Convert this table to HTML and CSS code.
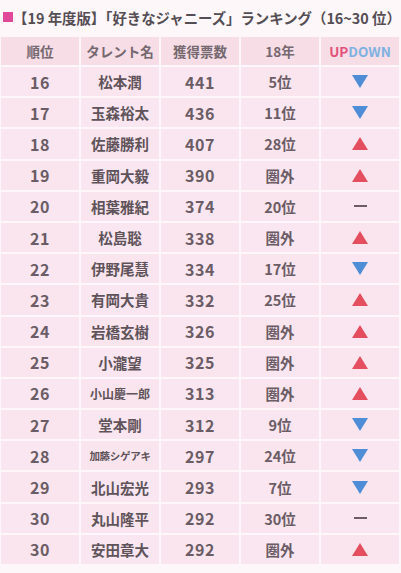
FILE: index.html
```html
<!DOCTYPE html>
<html lang="ja">
<head>
<meta charset="utf-8">
<link rel="stylesheet" href="styles.css">
</head>
<body>
<div class="title"><span class="sq"></span><span>【19 年度版】「好きなジャニーズ」ランキング（16~30 位）</span></div>
<div class="table">
  <div class="c h">順位</div><div class="c h">タレント名</div><div class="c h">獲得票数</div><div class="c h">18年</div><div class="c h"><span class="up">UP</span><span class="down">DOWN</span></div>

  <div class="c n">16</div><div class="c nm">松本潤</div><div class="c n">441</div><div class="c p">5位</div><div class="c"><span class="tri-d"></span></div>
  <div class="c n">17</div><div class="c nm">玉森裕太</div><div class="c n">436</div><div class="c p">11位</div><div class="c"><span class="tri-d"></span></div>
  <div class="c n">18</div><div class="c nm">佐藤勝利</div><div class="c n">407</div><div class="c p">28位</div><div class="c"><span class="tri-u"></span></div>
  <div class="c n">19</div><div class="c nm">重岡大毅</div><div class="c n">390</div><div class="c p">圏外</div><div class="c"><span class="tri-u"></span></div>
  <div class="c n">20</div><div class="c nm">相葉雅紀</div><div class="c n">374</div><div class="c p">20位</div><div class="c"><span class="dash"></span></div>
  <div class="c n">21</div><div class="c nm">松島聡</div><div class="c n">338</div><div class="c p">圏外</div><div class="c"><span class="tri-u"></span></div>
  <div class="c n">22</div><div class="c nm">伊野尾慧</div><div class="c n">334</div><div class="c p">17位</div><div class="c"><span class="tri-d"></span></div>
  <div class="c n">23</div><div class="c nm">有岡大貴</div><div class="c n">332</div><div class="c p">25位</div><div class="c"><span class="tri-u"></span></div>
  <div class="c n">24</div><div class="c nm">岩橋玄樹</div><div class="c n">326</div><div class="c p">圏外</div><div class="c"><span class="tri-u"></span></div>
  <div class="c n">25</div><div class="c nm">小瀧望</div><div class="c n">325</div><div class="c p">圏外</div><div class="c"><span class="tri-u"></span></div>
  <div class="c n">26</div><div class="c nm sm">小山慶一郎</div><div class="c n">313</div><div class="c p">圏外</div><div class="c"><span class="tri-u"></span></div>
  <div class="c n">27</div><div class="c nm">堂本剛</div><div class="c n">312</div><div class="c p">9位</div><div class="c"><span class="tri-d"></span></div>
  <div class="c n">28</div><div class="c nm xs">加藤シゲアキ</div><div class="c n">297</div><div class="c p">24位</div><div class="c"><span class="tri-d"></span></div>
  <div class="c n">29</div><div class="c nm">北山宏光</div><div class="c n">293</div><div class="c p">7位</div><div class="c"><span class="tri-d"></span></div>
  <div class="c n">30</div><div class="c nm">丸山隆平</div><div class="c n">292</div><div class="c p">30位</div><div class="c"><span class="dash"></span></div>
  <div class="c n">30</div><div class="c nm">安田章大</div><div class="c n">292</div><div class="c p">圏外</div><div class="c"><span class="tri-u"></span></div>
</div>
</body>
</html>
```
FILE: styles.css
```css
html, body {
  margin: 0;
  padding: 0;
}
body {
  width: 401px;
  height: 573px;
  background: #fdf7fa;
  font-family: "Noto Sans CJK JP", "Noto Sans", sans-serif;
  color: #6b5c65;
  overflow: hidden;
}
.title {
  display: flex;
  align-items: center;
  height: 20px;
  margin: 7px 0 0 3px;
  font-size: 14.4px;
  font-weight: 700;
  color: #554d54;
  white-space: nowrap;
}
.sq {
  flex-shrink: 0;
  display: inline-block;
  width: 10px;
  height: 10px;
  background: #e0489a;
}
.table {
  display: grid;
  grid-template-columns: repeat(5, 1fr);
  grid-template-rows: 28px;
  grid-auto-rows: 29.2px;
  gap: 2px;
  width: 398px;
  margin: 10px 0 0 1px;
}
.c {
  background: #fae5ee;
  display: flex;
  align-items: center;
  justify-content: center;
  font-weight: 700;
  white-space: nowrap;
}
.c:nth-child(even) {
  background: #f9e6f1;
}
.h {
  background: #f6dde6;
  font-size: 13.5px;
  color: #75686f;
}
.h:nth-child(even) {
  background: #f6dde6;
}
.n {
  font-size: 16px;
  letter-spacing: 0.6px;
}
.nm {
  font-size: 14.5px;
  color: #5f535a;
}
.nm.sm {
  font-size: 12px;
}
.nm.xs {
  font-size: 10.5px;
  letter-spacing: -0.3px;
}
.p {
  font-size: 14.5px;
}
.up {
  color: #e4507a;
  font-size: 13.5px;
}
.down {
  color: #7fb2e2;
  font-size: 13.5px;
}
.tri-d {
  width: 0;
  height: 0;
  border-left: 8px solid transparent;
  border-right: 8px solid transparent;
  border-top: 13px solid #4f8ed6;
}
.tri-u {
  width: 0;
  height: 0;
  border-left: 8px solid transparent;
  border-right: 8px solid transparent;
  border-bottom: 13px solid #e44e5f;
}
.dash {
  width: 13px;
  height: 2px;
  background: #6b5c65;
}
```
